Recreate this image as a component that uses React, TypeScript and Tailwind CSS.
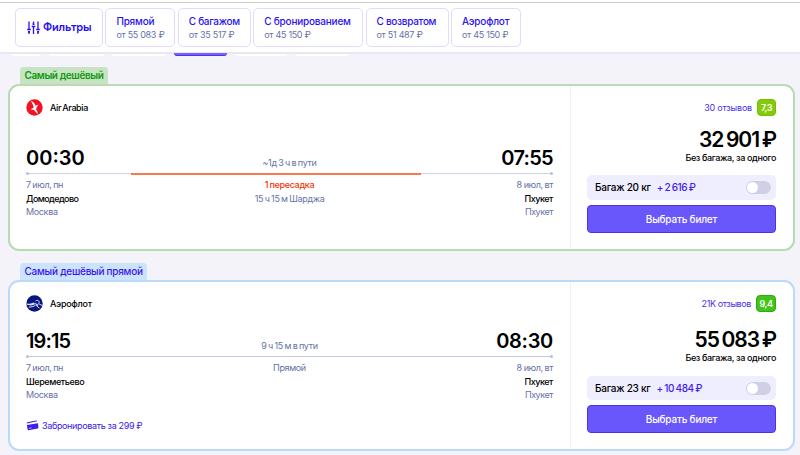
import clsx from "clsx";

const filters = [
  { title: "Прямой", price: "от 55 083 ₽", width: "w-[70px]", track: "tracking-[-0.2px]" },
  { title: "С багажом", price: "от 35 517 ₽", width: "w-[73px]", track: "tracking-[-0.3px]" },
  { title: "С бронированием", price: "от 45 150 ₽", width: "w-[110px]", track: "tracking-[-0.2px]" },
  { title: "С возвратом", price: "от 51 487 ₽", width: "w-[83px]", track: "tracking-[-0.3px]" },
  { title: "Аэрофлот", price: "от 45 150 ₽", width: "w-[70px]", track: "tracking-[-0.2px]" },
];

const SlidersIcon = () => (
  <svg width="13" height="14" viewBox="0 0 13 14" className="shrink-0" fill="none" stroke="#2a12f0" strokeWidth="1.3">
    <path d="M2 0.5V8M2 11V13M6.5 0.5V2.5M6.5 6V13M11 0.5V8M11 11V13" />
    <path d="M0.2 8.5H3.8M4.7 5.5H8.3M9.2 8.5H12.8" />
    <path d="M1 10.8H3M5.5 3.2H7.5M10 10.8H12" strokeWidth="1.8" />
  </svg>
);

const AirArabiaLogo = () => (
  <svg width="17" height="17" viewBox="0 0 17 17" className="shrink-0">
    <circle cx="8.5" cy="8.5" r="8.2" fill="#f01423" />
    <path d="M4.8 1.8C7.4 2.8 9.3 4.9 9.4 6.8L12.4 5.6L10.6 8.4C10.6 9.4 10.2 10 9.8 10.5C11.2 11.4 11.8 13.3 11.6 15.3C10.4 13.4 9.4 12.2 8 11L4.6 10.3L7.6 8.8C7.6 7.2 6.4 4.2 4.8 1.8Z" fill="#fff" />
  </svg>
);

const AeroflotLogo = () => (
  <svg width="17" height="17" viewBox="0 0 17 17" className="shrink-0">
    <circle cx="8.5" cy="8.5" r="8.2" fill="#08157f" />
    <path d="M0.3 8.2C3.3 9.2 5.8 8.8 7.6 7.6L9.2 9L7.3 10.1C5 10.7 2.2 10.3 0.5 9.6Z" fill="#dfe2f4" />
    <path d="M2.8 12C6 12.3 8 11.3 9.6 10L13.5 13.2M9.2 7.8L11.7 10.7M9.6 5.8C12 4.6 13.6 6 13 8.3C12.6 9.5 11.4 10 10.4 9.7M13.4 9.3L16.2 10.4" fill="none" stroke="#dfe2f4" strokeWidth="1" />
  </svg>
);

const CardIcon = () => (
  <svg width="13" height="11" viewBox="0 0 13 11" className="shrink-0">
    <path d="M1.4 2.2L10 0.4Q10.9 0.3 11.1 1.2L0.8 3.6Q0.6 2.6 1.4 2.2Z" fill="#3a20e8" />
    <path d="M0.9 5L12 3.2L12.4 7.4Q12.4 8.3 11.6 8.5L2.7 10.3Q1.8 10.4 1.6 9.5Z" fill="#3a20e8" />
    <path d="M2.9 8.4L5.6 7.9" stroke="#b9aefc" strokeWidth="0.9" />
  </svg>
);

const tickets: any[] = [
  {
    id: "arabia",
    label: "Самый дешёвый",
    labelStyle: "w-[88px] bg-[#c7e3c3] text-[#0d9a0d] tracking-[-0.4px]",
    border: "border-[#b9dab3]",
    cardHeight: "h-[167px]",
    logo: <AirArabiaLogo />,
    airline: "Air Arabia",
    nameTrack: "tracking-[-0.4px]",
    timeTop: "mt-[30px]",
    depart: { time: "00:30", timeTrack: "tracking-[0px]", date: "7 июл, пн", airport: "Домодедово", airportTrack: "tracking-[-0.6px]", city: "Москва" },
    arrive: { time: "07:55", timeTrack: "tracking-[-0.7px]", date: "8 июл, вт", airport: "Пхукет", city: "Пхукет" },
    duration: "~1д 3 ч в пути",
    stops: 1,
    reviews: "30 отзывов",
    reviewsTrack: "tracking-[-0.2px]",
    score: "7,3",
    scoreStyle: "bg-[#84cc0a] border-[#78bd05] w-[19px]",
    price: "32 901 ₽",
    priceTop: "mt-[11px]",
    barStyle: "mt-[12px] h-[25px]",
    baggage: "Багаж 20 кг",
    extra: "+ 2 616 ₽",
  },
  {
    id: "aeroflot",
    label: "Самый дешёвый прямой",
    labelStyle: "w-[127px] bg-[#cbe3fb] text-[#3a14f0] tracking-[-0.25px]",
    border: "border-[#bbd9f8]",
    cardHeight: "h-[171px]",
    logo: <AeroflotLogo />,
    airline: "Аэрофлот",
    nameTrack: "tracking-[-0.3px]",
    timeTop: "mt-[17px]",
    depart: { time: "19:15", timeTrack: "tracking-[-0.9px]", date: "7 июл, пн", airport: "Шереметьево", airportTrack: "tracking-[-0.4px]", city: "Москва" },
    arrive: { time: "08:30", timeTrack: "tracking-[-0.3px]", date: "8 июл, вт", airport: "Пхукет", city: "Пхукет" },
    duration: "9 ч 15 м в пути",
    stops: 0,
    booking: "Забронировать за 299 ₽",
    reviews: "21K отзывов",
    reviewsTrack: "tracking-[-0.4px]",
    score: "9,4",
    scoreStyle: "bg-[#43c31b] border-[#27ae0b] w-[20px]",
    price: "55 083 ₽",
    priceTop: "mt-[15px]",
    barStyle: "mt-[13px] h-[24px]",
    baggage: "Багаж 23 кг",
    extra: "+ 10 484 ₽",
  },
];

const RouteLine = ({ stops }: { stops: number }) => (
  <div className="mt-px flex h-[2px] items-start">
    <span className="-mt-px h-[3px] w-[3px] rounded-full bg-[#b9bdd9]" />
    {stops > 0 ? (
      <>
        <span className="h-px w-[102px] bg-[#cfd1e6]" />
        <span className="h-[2px] w-[290px] bg-[#fa7a50]" />
        <span className="h-px flex-1 bg-[#cfd1e6]" />
      </>
    ) : (
      <span className="h-px flex-1 bg-[#c6c8e0]" />
    )}
    <span className="-mt-px h-[3px] w-[3px] rounded-full bg-[#b9bdd9]" />
  </div>
);

const Ticket = ({ ticket }: any) => (
  <article>
    <div className={clsx("ml-[12px] h-[17px] rounded-t-[4px] pl-[4.5px] text-[10px] leading-[17px] whitespace-nowrap", ticket.stops > 0 ? "font-semibold" : "font-medium", ticket.labelStyle)}>
      {ticket.label}
    </div>
    <div className={clsx("flex rounded-[11px] border-2 bg-white", ticket.border, ticket.cardHeight)}>
      <div className="w-[560px] pt-[13px] pr-[17px] pl-[16px] text-[9px] leading-[13.5px] tracking-[-0.35px] text-[#6673a6] [word-spacing:-0.6px]">
        <div className="flex h-[17px] items-center gap-[7px]">
          {ticket.logo}
          <span className={clsx("font-medium text-black", ticket.nameTrack)}>{ticket.airline}</span>
        </div>
        <div className={clsx("grid h-[26px] grid-cols-3 items-center", ticket.timeTop)}>
          <b className={clsx("text-[20px] font-semibold text-black", ticket.depart.timeTrack)}>{ticket.depart.time}</b>
          <span className="pt-[8px] text-center">{ticket.duration}</span>
          <b className={clsx("text-right text-[20px] font-semibold text-black", ticket.arrive.timeTrack)}>{ticket.arrive.time}</b>
        </div>
        <RouteLine stops={ticket.stops} />
        <div className="mt-[3px] grid grid-cols-3">
          <div>
            <p>{ticket.depart.date}</p>
            <p className={clsx("font-medium text-black", ticket.depart.airportTrack)}>{ticket.depart.airport}</p>
            <p>{ticket.depart.city}</p>
          </div>
          <div className="text-center">
            {ticket.stops > 0 ? (
              <>
                <p className="font-medium text-[#f5360b]">1 пересадка</p>
                <p>15 ч 15 м Шарджа</p>
              </>
            ) : (
              <p>Прямой</p>
            )}
          </div>
          <div className="text-right tracking-[-0.45px] [word-spacing:0px]">
            <p>{ticket.arrive.date}</p>
            <p className="font-medium text-black">{ticket.arrive.airport}</p>
            <p>{ticket.arrive.city}</p>
          </div>
        </div>
        {ticket.booking && (
          <div className="mt-[17px] flex items-center gap-[3px] text-[#3a20e8] [word-spacing:0px]">
            <CardIcon />
            <span>{ticket.booking}</span>
          </div>
        )}
      </div>

      <div className="flex-1 border-l border-[#f1f1f7] pt-[13px] pr-[17px] pl-[16px]">
        <div className="flex h-[17px] items-center justify-end gap-[5px] text-[9px] text-[#4a30ec]">
          <span className={ticket.reviewsTrack}>{ticket.reviews}</span>
          <span className={clsx("flex h-[17px] items-center justify-center rounded-[4px] border font-semibold tracking-[-0.4px] text-white", ticket.scoreStyle)}>{ticket.score}</span>
        </div>
        <div className={clsx("text-right text-[21px] font-semibold leading-[26px] tracking-[-1px] text-black [word-spacing:-1.7px]", ticket.priceTop)}>{ticket.price}</div>
        <div className="-mt-px text-right text-[9px] font-medium leading-[11px] tracking-[-0.38px] text-black">Без багажа, за одного</div>
        <div className={clsx("flex items-center rounded-[5px] bg-[#eeeefe] pr-[5px] pl-[8px] text-[10px]", ticket.barStyle)}>
          <span className="font-medium tracking-[-0.25px] text-black">{ticket.baggage}</span>
          <span className="ml-[6px] font-medium tracking-[-0.5px] text-[#4222ec] [word-spacing:-0.5px]">{ticket.extra}</span>
          <span className="ml-auto flex h-[13px] w-[25px] items-center rounded-full bg-[#cfcfe6] pl-px">
            <i className="h-[11px] w-[11px] rounded-full bg-white" />
          </span>
        </div>
        <button className="mt-[5px] block h-[28px] w-full rounded-[4px] border border-[#4c34e5] bg-[#6a57fb] text-[10px] font-medium tracking-[-0.2px] text-white">
          Выбрать билет
        </button>
      </div>
    </div>
  </article>
);

export default function App() {
  return (
    <div className="h-[455px] w-[800px] overflow-hidden bg-[#f4f3f9] font-['Inter','Noto_Sans',sans-serif]">
      <header className="h-[54px] border-b-2 border-[#e8e8f4] bg-white pt-[2px]">
        <div className="h-px bg-[#cfcfcf]" />
        <div className="mt-[5px] ml-[15px] flex gap-[2.4px] whitespace-nowrap">
          <button className="flex h-[39px] w-[88px] items-center gap-[3px] rounded-[5px] border border-[#e0dcfc] pl-[11px] text-[11px] font-semibold tracking-[-0.15px] text-[#2a12f0]">
            <SlidersIcon />
            Фильтры
          </button>
          {filters.map((f) => (
            <button key={f.title} className={clsx("h-[39px] rounded-[5px] border border-[#e0dcfc] pl-[10px] text-left", f.width)}>
              <span className={clsx("block text-[10px] font-medium leading-[13px] text-[#2a12f0]", f.track)}>{f.title}</span>
              <span className="block text-[9px] leading-[13px] tracking-[-0.35px] text-[#6673a6] [word-spacing:0.2px]">{f.price}</span>
            </button>
          ))}
        </div>
      </header>

      {/* tabs hidden under the sticky header */}
      <div className="ml-[11px] flex h-[13px] gap-[8px]">
        <span className="h-[2px] w-[30px] rounded-b-full bg-white" />
        <span className="h-[2px] w-[55px] rounded-b-full bg-white" />
        <span className="h-[2px] w-[54px] rounded-b-full bg-white" />
        <span className="-mt-px h-[3px] w-[53px] rounded-b-[5px] border-b border-[#4b32ec] bg-[#7564fb]" />
        <span className="h-[2px] w-[52px] rounded-b-full bg-white" />
        <span className="h-[2px] w-[54px] rounded-b-full bg-white" />
      </div>

      <main className="ml-[8px] flex w-[787px] flex-col gap-[12px]">
        {tickets.map((t) => (
          <Ticket key={t.id} ticket={t} />
        ))}
      </main>
    </div>
  );
}
